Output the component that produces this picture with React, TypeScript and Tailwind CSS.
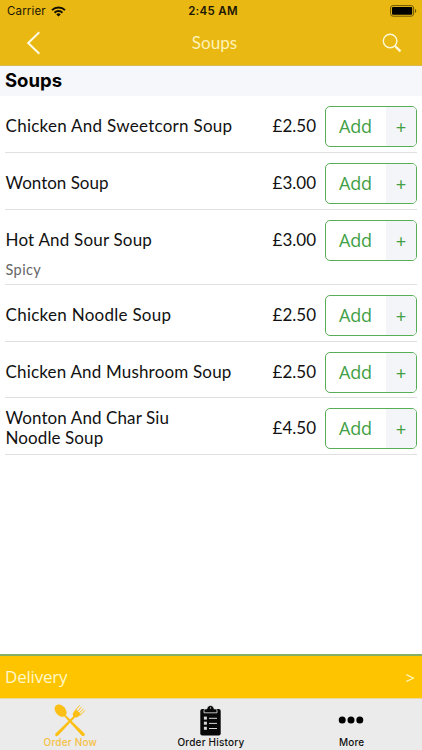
import React from 'react'

interface MenuItem {
  name: string
  price: string
  note?: string
  rowClass: string
  nameClass: string
}

const SOUPS: MenuItem[] = [
  { name: 'Chicken And Sweetcorn Soup', price: '£2.50', rowClass: 'h-[57px]', nameClass: 'tracking-[0.27px]' },
  { name: 'Wonton Soup', price: '£3.00', rowClass: 'h-[57px]', nameClass: 'tracking-normal' },
  { name: 'Hot And Sour Soup', price: '£3.00', note: 'Spicy', rowClass: 'h-[75px]', nameClass: 'tracking-[0.2px]' },
  { name: 'Chicken Noodle Soup', price: '£2.50', rowClass: 'h-[57px]', nameClass: 'tracking-[0.27px]' },
  { name: 'Chicken And Mushroom Soup', price: '£2.50', rowClass: 'h-14', nameClass: 'tracking-[0.18px]' },
  { name: 'Wonton And Char Siu\nNoodle Soup', price: '£4.50', rowClass: 'h-[57px]', nameClass: 'tracking-[0.1px]' },
]

const StatusBar = () => (
  <div className="grid h-[22px] grid-cols-3 items-center pl-[7px] pr-[5px] font-['Inter',sans-serif] text-[11.5px] text-[#1c1703]">
    <div className="flex items-center gap-[5px]">
      <span className="pt-px tracking-[0.15px]">Carrier</span>
      <svg width="15" height="11" viewBox="0 0 15 11" fill="none" stroke="#120f02" strokeWidth="2">
        <path d="M1 4.1a9.2 9.2 0 0 1 13 0" />
        <path d="M3.6 6.7a5.5 5.5 0 0 1 7.8 0" />
        <path d="M7.5 10.6 5.3 8.4a3.1 3.1 0 0 1 4.4 0z" fill="#120f02" stroke="none" />
      </svg>
    </div>
    <span className="pl-[2px] pt-px text-center text-[11.5px] font-semibold tracking-[0.3px]">2:45 AM</span>
    <svg className="mb-px justify-self-end" width="27" height="12" viewBox="0 0 27 12">
      <rect x="0.6" y="0.6" width="23" height="10.6" rx="2.4" fill="none" stroke="#6e5608" />
      <rect x="2" y="2" width="20.2" height="7.8" rx="1" fill="#000" />
      <path d="M25 4v4c1.7-.6 1.7-3.4 0-4z" fill="#6e5608" />
    </svg>
  </div>
)

const NavBar = () => (
  <div className="grid h-11 grid-cols-3 items-center pb-[2px]">
    <svg className="ml-[26px]" width="15" height="24" viewBox="0 0 15 24" fill="none" stroke="#fffbe8" strokeWidth="2">
      <path d="M13.3 1.3 2.2 12l11.1 10.8" />
    </svg>
    <h1 className="pl-[7px] text-center font-['Lato',sans-serif] text-[17px] tracking-[0.1px] text-[#fff3b5]">Soups</h1>
    <svg className="mb-px mr-[20px] justify-self-end" width="20" height="20" viewBox="0 0 20 20" fill="none" stroke="#fff8d6">
      <circle cx="8.1" cy="8" r="6.8" strokeWidth="1.4" />
      <path d="m12.8 12.8 1.5 1.5" strokeWidth="1.4" />
      <path d="m13.6 13.6 4.9 4.8" strokeWidth="2.3" />
    </svg>
  </div>
)

const AddButton = () => (
  <button className="flex h-[41px] w-[92px] shrink-0 overflow-hidden rounded-[5px] border border-[#58ae57] text-[#43a046]">
    <span className="flex w-[60px] items-center justify-center pr-px font-['Open_Sans',sans-serif] text-[18px] font-normal tracking-[-0.2px]">Add</span>
    <span className="flex h-full flex-1 items-center justify-center bg-[#f4f5f8] pt-[2px] font-['Lato',sans-serif] text-[18px]">+</span>
  </button>
)

const MenuRow = ({ item }: { item: MenuItem }) => (
  <li className={`${item.rowClass} flex flex-col border-b border-[#e0e0e0]`}>
    <div className="flex h-14 shrink-0 items-center pt-[4px]">
      <span className={`flex-1 whitespace-pre-line pl-[0.5px] leading-5 ${item.nameClass}`}>{item.name}</span>
      <span className="mr-[9px]">{item.price}</span>
      <AddButton />
    </div>
    {item.note && <p className="-mt-[6px] pl-[0.5px] text-[14.5px] leading-5 tracking-[0.4px] text-[#666]">{item.note}</p>}
  </li>
)

const UtensilsIcon = () => (
  <svg width="34" height="34" viewBox="0 0 34 34" fill="#fbbf16">
    <ellipse cx="7.6" cy="7.6" rx="5" ry="7" transform="rotate(-42 7.6 7.6)" />
    <path d="m12 11.4 19.3 18.9c1.5 1.9-.9 4-2.6 2.2L10.8 12.8z" />
    <path d="m21.4 12.2-18.6 18c-1.8 1.9.5 4.1 2.4 2.2l17.6-18.9z" />
    <path d="M20.4 9.4c-1 1.5-.8 2.9.3 4.1 1.3 1.2 2.9 1.3 4.4.2l2.8-2.5-4.8-4.8z" />
    <path d="m21.6 8.2 4.8-5.6m-2.9 7 4.8-5.4m-3 7 4.9-5.2m-3.1 6.2 4.7-4.5" stroke="#fbbf16" strokeWidth="0.95" strokeLinecap="round" />
  </svg>
)

const ClipboardIcon = () => (
  <svg width="21" height="31" viewBox="0 0 21 31">
    <rect x="0.3" y="4" width="20.4" height="26.4" rx="2" fill="#080808" />
    <path d="M4 7.8V5.6c0-1.2.6-1.6 3-1.9C7.4 1.6 8.6.5 10.5.5s3.1 1.1 3.5 3.2c2.4.3 3 .7 3 1.9v2.2z" fill="#080808" stroke="#ebebeb" strokeWidth="0.8" />
    <circle cx="10.5" cy="2.9" r="0.7" fill="#ebebeb" />
    <g fill="#d8d8d8">
      <rect x="3.9" y="11.6" width="3" height="3" />
      <rect x="3.9" y="16.7" width="3" height="3" />
      <rect x="3.9" y="21.8" width="3" height="3" />
      <rect x="9" y="12.8" width="8" height="1" />
      <rect x="9" y="17.9" width="8" height="1" />
      <rect x="9" y="23" width="8" height="1" />
    </g>
  </svg>
)

const MoreIcon = () => (
  <svg className="mb-px mr-px" width="26" height="8" viewBox="0 0 26 8" fill="#000">
    <circle cx="4.2" cy="4" r="3.5" />
    <circle cx="13" cy="4" r="3.5" />
    <circle cx="21.8" cy="4" r="3.5" />
  </svg>
)

const TABS = [
  { label: 'Order Now', icon: <UtensilsIcon />, color: 'text-[#f5c044]' },
  { label: 'Order History', icon: <ClipboardIcon />, color: 'text-[#111]' },
  { label: 'More', icon: <MoreIcon />, color: 'text-[#111]' },
]

export default function App() {
  return (
    <div className="flex h-[750px] w-[422px] flex-col overflow-hidden bg-white font-['Lato',sans-serif] text-[17px] text-[#111]">
      <header className="h-[66px] shrink-0 border-b border-[#d8b850] bg-[#e9b813]">
        <StatusBar />
        <NavBar />
      </header>

      <main className="flex-1">
        <h2 className="h-[30px] bg-[#f6f7fa] pl-[5px] font-['Inter',sans-serif] text-[18.5px] font-bold leading-[29px] text-black">Soups</h2>
        <ul className="mx-[5px]">
          {SOUPS.map((item) => (
            <MenuRow key={item.name} item={item} />
          ))}
        </ul>
      </main>

      <button className="flex h-11 shrink-0 items-center justify-between border-t-2 border-[#83b064] bg-[#ffc400] pl-[5px] pr-[7px] text-[#fff8c9]">
        <span className="font-['Open_Sans',sans-serif] text-[17px] tracking-[-0.2px]">Delivery</span>
        <span className="pt-px font-['Open_Sans',sans-serif] text-[16px] font-medium">&gt;</span>
      </button>

      <nav className="grid h-[52px] shrink-0 grid-cols-3 border-t border-[#ecd9a0] bg-[#ebebeb] font-['Inter',sans-serif] text-[10px] font-medium">
        {TABS.map((tab) => (
          <div key={tab.label} className={`flex flex-col items-center ${tab.color}`}>
            <div className="flex h-[42px] items-center">{tab.icon}</div>
            <span className="-mt-[5px] leading-3 tracking-[0.2px]">{tab.label}</span>
          </div>
        ))}
      </nav>
    </div>
  )
}
